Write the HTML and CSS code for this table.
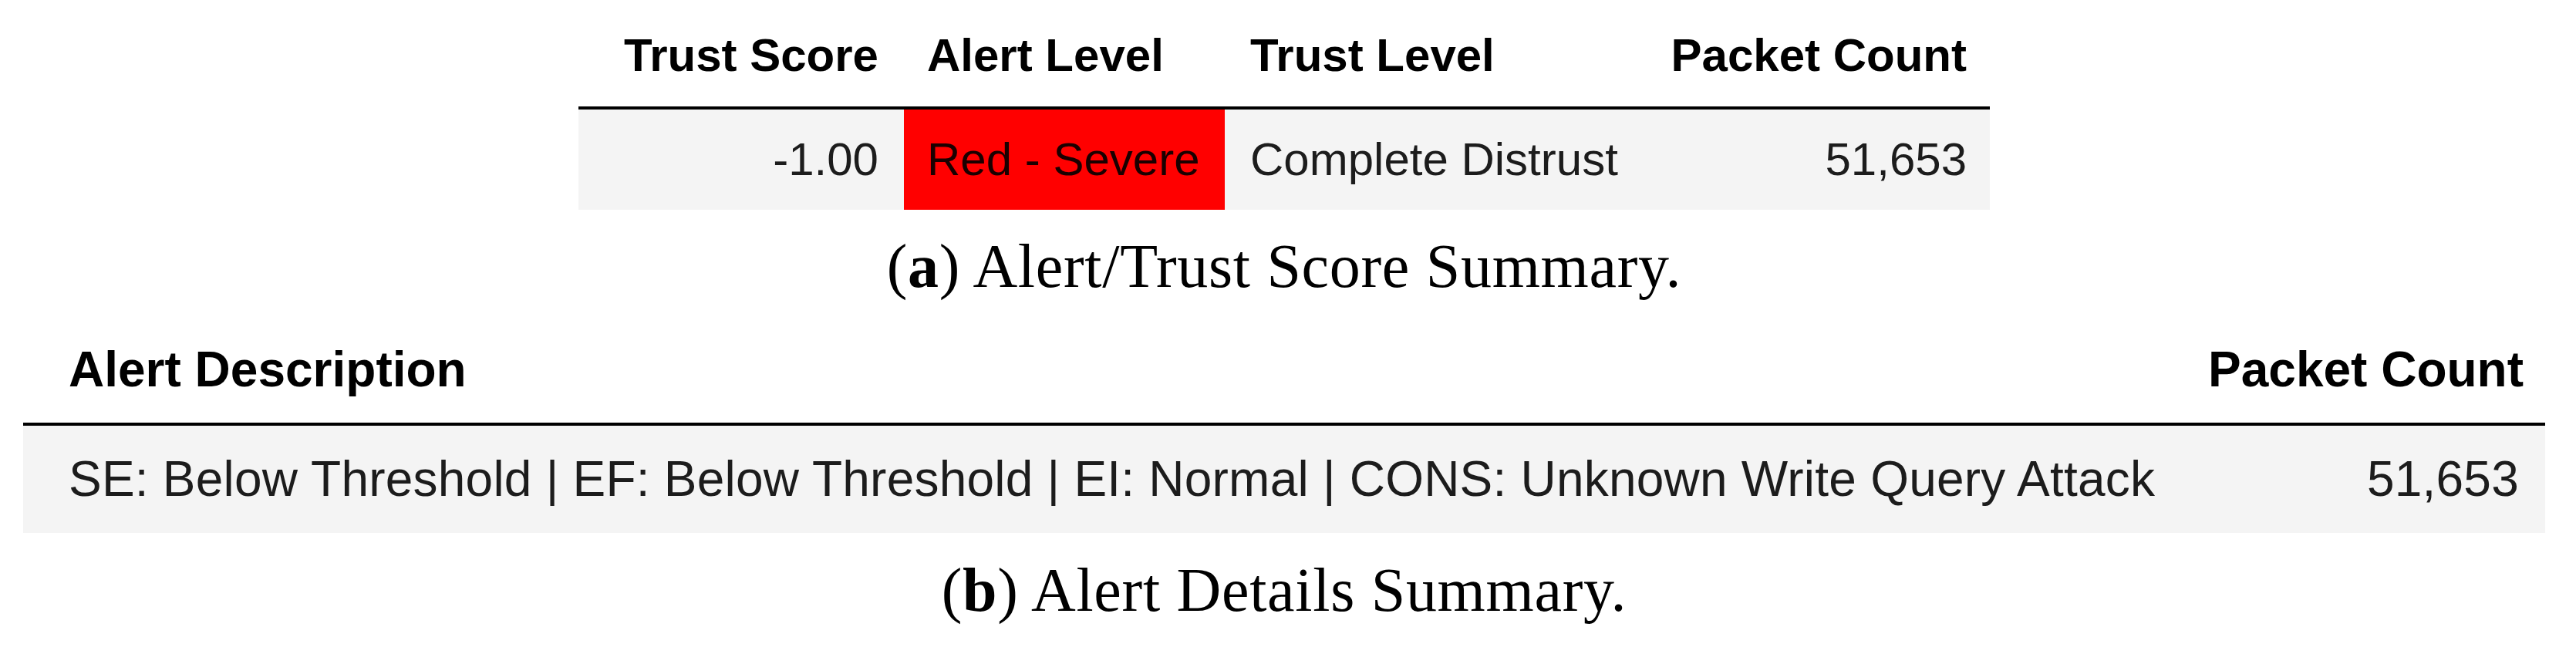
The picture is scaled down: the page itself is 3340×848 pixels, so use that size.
FILE: index.html
```html
<!DOCTYPE html>
<html lang="en">
<head>
<meta charset="utf-8">
<title>Alert Summary</title>
<link rel="stylesheet" href="styles.css">
</head>
<body>
<main class="page">
  <figure class="sub">
    <div class="tbl tbl-a" role="table">
      <div class="th num" role="columnheader">Trust Score</div>
      <div class="th" role="columnheader">Alert Level</div>
      <div class="th pad-l" role="columnheader">Trust Level</div>
      <div class="th num pad-r" role="columnheader">Packet Count</div>
      <div class="td num" role="cell">-1.00</div>
      <div class="td alert-red" role="cell">Red - Severe</div>
      <div class="td pad-l" role="cell">Complete Distrust</div>
      <div class="td num pad-r" role="cell">51,653</div>
    </div>
    <figcaption class="caption">(<b>a</b>) Alert/Trust Score Summary.</figcaption>
  </figure>
  <figure class="sub sub-b">
    <div class="tbl tbl-b" role="table">
      <div class="th desc" role="columnheader">Alert Description</div>
      <div class="th num" role="columnheader">Packet Count</div>
      <div class="td desc" role="cell">SE: Below Threshold | EF: Below Threshold | EI: Normal | CONS: Unknown Write Query Attack</div>
      <div class="td num" role="cell">51,653</div>
    </div>
    <figcaption class="caption caption-b">(<b>b</b>) Alert Details Summary.</figcaption>
  </figure>
</main>
</body>
</html>
```

FILE: styles.css
```css
html, body {
  margin: 0;
  padding: 0;
  background: #ffffff;
}

.page {
  width: 3330px;
  height: 848px;
  box-sizing: border-box;
  padding-top: 6px;
  display: flex;
  flex-direction: column;
  align-items: center;
}

.sub {
  margin: 0;
  display: flex;
  flex-direction: column;
  align-items: center;
}

.sub-b {
  margin-top: 19px;
}

.tbl {
  display: grid;
  font-family: "Liberation Sans", Arial, sans-serif;
  color: #000;
}

.tbl-a {
  width: 1830px;
  grid-template-columns: 422px 416px 543px 449px;
  font-size: 60px;
  line-height: 69px;
}

.tbl-b {
  width: 3270px;
  grid-template-columns: 1fr auto;
  font-size: 64px;
  line-height: 74px;
}

.th {
  font-weight: 700;
  white-space: nowrap;
  border-bottom: 4px solid #000;
}

.tbl-a .th {
  padding: 31px 30px 32px 30px;
}

.tbl-b .th {
  padding: 32px 30px 32px 30px;
}

.td {
  background: #f4f4f4;
  color: #1c1c1c;
  white-space: nowrap;
}

.tbl-a .td {
  padding: 30px 30px 31px 30px;
}

.tbl-b .td {
  padding: 32px 30px 33px 30px;
  letter-spacing: 0.22px;
}

.num {
  text-align: right;
}

.tbl-a .num {
  padding-right: 33px;
}

.tbl-a .pad-r {
  padding-right: 30px;
}

.tbl-a .pad-l {
  padding-left: 33px;
}

.tbl-b .desc {
  padding-left: 59px;
}

.tbl-b .th.num {
  padding-right: 28px;
}

.tbl-b .td.num {
  padding-right: 34px;
}

.alert-red {
  background: #ff0000;
  color: #1a0000;
}

.caption {
  margin-top: 27px;
  font-family: "Liberation Serif", "Times New Roman", serif;
  font-size: 80px;
  line-height: 92px;
  letter-spacing: 0.7px;
  color: #000;
  white-space: nowrap;
}

.caption-b {
  margin-top: 28px;
}

.caption b {
  font-weight: 700;
}
```
